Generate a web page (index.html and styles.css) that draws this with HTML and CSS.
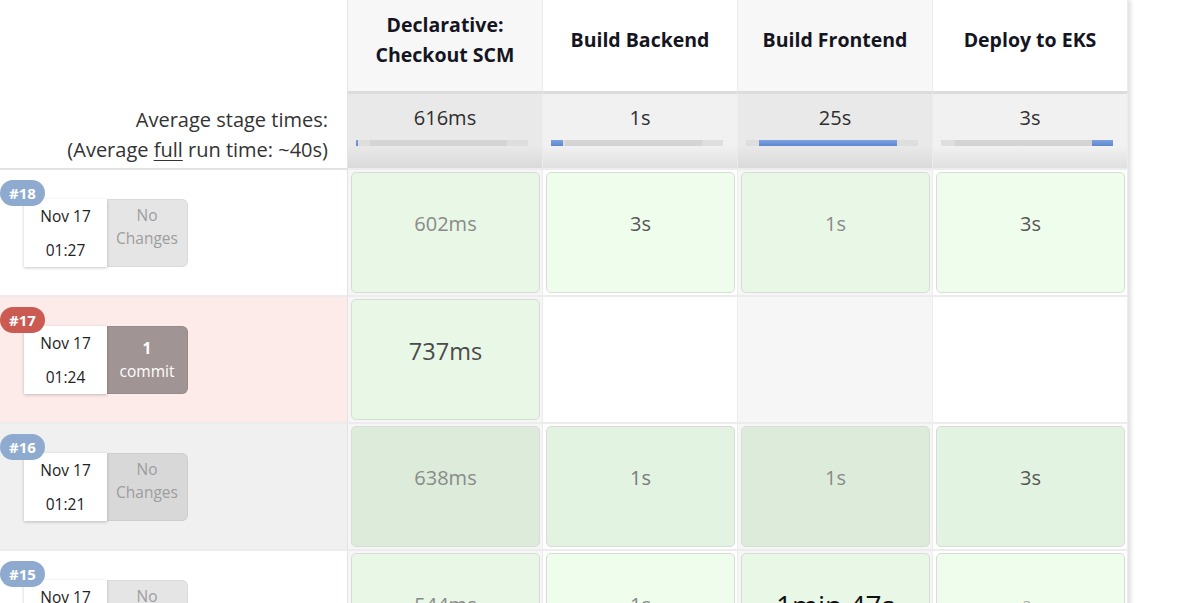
FILE: index.html
```html
<!DOCTYPE html>
<html>
<head>
<meta charset="utf-8">
<link rel="stylesheet" href="styles.css">
</head>
<body>
<div class="stage-view">
  <div class="corner"></div>
  <div class="stage-head col-odd"><span>Declarative: Checkout SCM</span></div>
  <div class="stage-head col-even"><span>Build Backend</span></div>
  <div class="stage-head col-odd"><span>Build Frontend</span></div>
  <div class="stage-head col-even"><span>Deploy to EKS</span></div>

  <div class="avg-label">
    <div>Average stage times:</div>
    <div>(Average <u>full</u> run time: ~40s)</div>
  </div>
  <div class="avg col-odd"><div class="avg-time">616ms</div><div class="bar"><div class="bar-fill" style="margin-left:0px;width:2px"></div></div></div>
  <div class="avg col-even"><div class="avg-time">1s</div><div class="bar"><div class="bar-fill" style="margin-left:0px;width:12px"></div></div></div>
  <div class="avg col-odd"><div class="avg-time">25s</div><div class="bar"><div class="bar-fill" style="margin-left:13px;width:138px"></div></div></div>
  <div class="avg col-even"><div class="avg-time">3s</div><div class="bar"><div class="bar-fill" style="margin-left:151px;width:21px"></div></div></div>

  <!-- #18 -->
  <div class="build row-plain">
    <span class="badge badge-ok">#18</span>
    <div class="build-card">
      <div class="date"><div>Nov 17</div><div>01:27</div></div>
      <div class="changes"><div>No</div><div>Changes</div></div>
    </div>
  </div>
  <div class="cell col-odd"><div class="box box-a"><span class="t t-light">602ms</span></div></div>
  <div class="cell col-even"><div class="box box-b"><span class="t t-mid">3s</span></div></div>
  <div class="cell col-odd"><div class="box box-a"><span class="t t-light">1s</span></div></div>
  <div class="cell col-even"><div class="box box-b"><span class="t t-mid">3s</span></div></div>

  <!-- #17 -->
  <div class="build row-failed">
    <span class="badge badge-fail">#17</span>
    <div class="build-card">
      <div class="date"><div>Nov 17</div><div>01:24</div></div>
      <div class="changes changes-commit"><div class="num">1</div><div>commit</div></div>
    </div>
  </div>
  <div class="cell col-odd"><div class="box box-a"><span class="t t-big">737ms</span></div></div>
  <div class="cell col-even"></div>
  <div class="cell col-odd"></div>
  <div class="cell col-even"></div>

  <!-- #16 -->
  <div class="build row-shaded">
    <span class="badge badge-ok">#16</span>
    <div class="build-card">
      <div class="date"><div>Nov 17</div><div>01:21</div></div>
      <div class="changes changes-dark"><div>No</div><div>Changes</div></div>
    </div>
  </div>
  <div class="cell col-odd"><div class="box box-c"><span class="t t-light">638ms</span></div></div>
  <div class="cell col-even"><div class="box box-d"><span class="t t-light2">1s</span></div></div>
  <div class="cell col-odd"><div class="box box-c"><span class="t t-light">1s</span></div></div>
  <div class="cell col-even"><div class="box box-d"><span class="t t-mid">3s</span></div></div>

  <!-- #15 -->
  <div class="build row-plain">
    <span class="badge badge-ok">#15</span>
    <div class="build-card">
      <div class="date"><div>Nov 17</div><div>01:18</div></div>
      <div class="changes"><div>No</div><div>Changes</div></div>
    </div>
  </div>
  <div class="cell col-odd"><div class="box box-a"><span class="t t-light">544ms</span></div></div>
  <div class="cell col-even"><div class="box box-b"><span class="t t-light">1s</span></div></div>
  <div class="cell col-odd"><div class="box box-a"><span class="t t-huge">1min 47s</span></div></div>
  <div class="cell col-even"><div class="box box-b"><span class="t t-faint">3s</span></div></div>
</div>
</body>
</html>
```

FILE: styles.css
```css
html, body {
  margin: 0;
  padding: 0;
  background: #fff;
}
body {
  font-family: "Open Sans", "Noto Sans", sans-serif;
  color: #333;
  overflow: hidden;
}
.stage-view {
  display: grid;
  grid-template-columns: 348px repeat(4, 195px);
  grid-template-rows: 91px 79px repeat(4, 127px);
  width: 1128px;
  box-shadow: 3px 0 4px rgba(0, 0, 0, 0.12);
}
.corner,
.avg-label,
.build {
  border-right: 1px solid #e3e3e3;
}
.col-odd,
.col-even {
  border-right: 1px solid #ececec;
}
.col-odd { background: #f6f6f6; }
.col-even { background: #fff; }

.stage-head {
  display: flex;
  align-items: center;
  justify-content: center;
  text-align: center;
  padding: 0 22px 11px;
  font-weight: 700;
  font-size: 19.5px;
  line-height: 30px;
  color: #15151f;
}
.stage-head.col-odd { background: #f7f7f7; }

.avg-label {
  display: flex;
  flex-direction: column;
  justify-content: flex-end;
  align-items: flex-end;
  padding: 0 19px 3px 0;
  font-size: 20px;
  line-height: 30px;
  color: #333;
  border-bottom: 2px solid #e2e2e2;
}
.avg-label u { text-decoration-thickness: 1px; text-underline-offset: 3px; }

.avg {
  border-top: 3px solid #dcdcdc;
  border-bottom: 2px solid #ececec;
  padding-top: 11px;
}
.avg.col-odd { background: linear-gradient(to bottom, #e9e9e9 0, #e9e9e9 70%, #dadada 100%); }
.avg.col-even { background: linear-gradient(to bottom, #f1f1f1 0, #f1f1f1 70%, #e0e0e0 100%); }
.avg-time {
  text-align: center;
  font-size: 20px;
  line-height: 26px;
  color: #2e2e2e;
}
.bar {
  margin: 9px 0 0 8px;
  width: 172px;
  height: 6px;
  display: flex;
  background: linear-gradient(to right, #dedede 0, #dedede 8%, #d4d4d4 8%, #d4d4d4 88%, #dedede 88%, #dedede 100%);
}
.bar-fill {
  height: 6px;
  background: linear-gradient(to bottom, #7da1e0, #5f86cf);
}

.build {
  position: relative;
  padding: 29px 0 0 24px;
  border-bottom: 2px solid #ececec;
}
.row-plain { background: #fff; }
.row-failed { background: #fdebea; }
.row-shaded { background: #f0f0f0; }
.badge {
  position: absolute;
  left: 0;
  top: 10px;
  width: 45px;
  height: 26px;
  border-radius: 13px;
  color: #fff;
  font-weight: 700;
  font-size: 15px;
  line-height: 26px;
  text-align: center;
  z-index: 2;
}
.badge-ok { background: #8eaacf; }
.badge-fail { background: #cb5a52; }
.build-card {
  display: flex;
  height: 68px;
}
.date {
  width: 83px;
  background: #fff;
  box-shadow: 0 1px 3px rgba(0, 0, 0, 0.22);
  display: flex;
  flex-direction: column;
  justify-content: center;
  align-items: center;
  gap: 11px;
  font-size: 15.5px;
  line-height: 23px;
  color: #222;
  position: relative;
  z-index: 1;
}
.changes {
  width: 81px;
  box-sizing: border-box;
  background: #e5e5e5;
  border: 1px solid #dadada;
  border-left: none;
  border-radius: 0 6px 6px 0;
  display: flex;
  flex-direction: column;
  align-items: center;
  padding-top: 4px;
  font-size: 15.5px;
  line-height: 23px;
  color: #9d9d9d;
}
.changes-dark { background: #d8d8d8; border-color: #cecece; }
.changes-commit {
  background: #a09494;
  border-color: #958989;
  color: #fff;
  padding-top: 10px;
}
.changes-commit .num { font-weight: 700; }

.cell {
  padding: 2px 2px 2px 3px;
  border-bottom: 2px solid #ececec;
}
.box {
  height: 100%;
  box-sizing: border-box;
  border: 1px solid #d8dcd7;
  border-radius: 5px;
  text-align: center;
  padding-top: 36px;
}
.box-a { background: #e8f7e6; }
.box-b { background: #effdec; }
.box-c { background: #dcebda; }
.box-d { background: #e3f3e1; }
.t {
  display: block;
  line-height: 30px;
  font-size: 20px;
}
.t-light { color: #8a8a8a; }
.t-light2 { color: #7a7a7a; }
.t-mid { color: #555; }
.t-big { color: #4a4a4a; font-size: 23.5px; }
.t-huge { color: #111; font-size: 28px; }
.t-faint { color: #aaa; font-size: 15px; }
```
